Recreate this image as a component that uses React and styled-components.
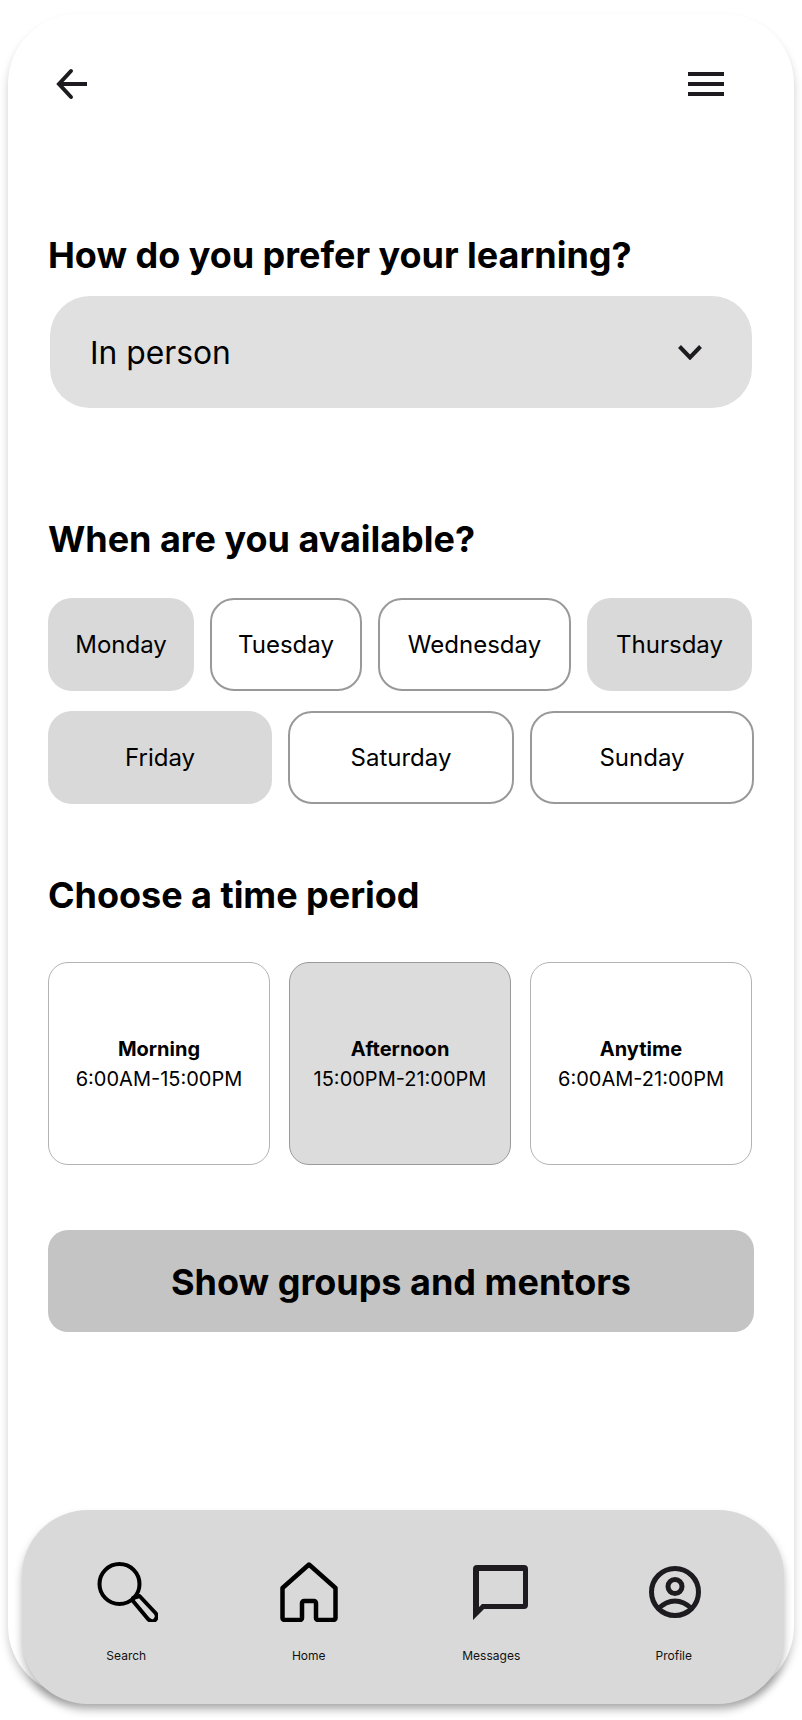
import React from 'react';
import styled, { createGlobalStyle } from 'styled-components';

const Global = createGlobalStyle`
  * { box-sizing: border-box; }
  html, body { margin: 0; padding: 0; background: #fff; }
  body { font-family: Inter, "Noto Sans", sans-serif; color: #000; }
`;

const Page = styled.div`
  width: 802px;
  height: 1720px;
  padding: 14px 8px 24px 8px;
  overflow: hidden;
`;

const Phone = styled.div`
  height: 100%;
  background: #fff;
  border-radius: 70px;
  box-shadow: 0 6px 8px rgba(0, 0, 0, 0.2);
  display: flex;
  flex-direction: column;
`;

const Top = styled.div`
  display: flex;
  justify-content: space-between;
  align-items: center;
  height: 32px;
  margin-top: 54px;
  padding: 0 70px 0 48px;
`;

const Main = styled.div`
  padding: 0 40px;
  display: flex;
  flex-direction: column;
`;

const Title = styled.h2`
  margin: ${p => p.$top}px 0 0;
  font-size: 36px;
  line-height: 44px;
  font-weight: 700;
  letter-spacing: -0.03px;
`;

const Select = styled.div`
  margin: 19px 0 0 2px;
  width: 702px;
  height: 112px;
  border-radius: 40px;
  background: #e0e0e0;
  display: flex;
  align-items: center;
  justify-content: space-between;
  padding: 0 50px 0 40px;
  font-size: 31.8px;
`;

const DayRow = styled.div`
  display: flex;
  gap: 16px;
  margin-top: ${p => p.$top}px;
`;

const Day = styled.div`
  width: ${p => p.$w}px;
  height: 93px;
  border-radius: 24px;
  display: flex;
  align-items: center;
  justify-content: center;
  font-size: 24px;
  background: ${p => (p.$on ? '#d9d9d9' : '#fff')};
  border: ${p => (p.$on ? 'none' : '2px solid #999')};
`;

const Periods = styled.div`
  display: grid;
  grid-template-columns: repeat(3, 222px);
  gap: 19px;
  margin-top: 45px;
`;

const Period = styled.div`
  height: 203px;
  border-radius: 20px;
  display: flex;
  flex-direction: column;
  align-items: center;
  justify-content: center;
  font-size: 20px;
  line-height: 30px;
  background: ${p => (p.$on ? '#dcdcdc' : '#fff')};
  border: 1.5px solid ${p => (p.$on ? '#999' : '#b3b3b3')};
  b { font-weight: 700; }
`;

const Action = styled.div`
  margin-top: 65px;
  width: 706px;
  height: 102px;
  padding-top: 1px;
  border-radius: 20px;
  background: #c4c4c4;
  display: flex;
  align-items: center;
  justify-content: center;
  font-size: 36px;
  font-weight: 700;
`;

const Nav = styled.div`
  margin: auto 10px -8px 14px;
  height: 194px;
  flex-shrink: 0;
  border-radius: 66px;
  background: #d9d9d9;
  box-shadow: 0 6px 8px rgba(0, 0, 0, 0.28);
  display: grid;
  grid-template-columns: repeat(4, 182.5px);
  padding: 52px 0 0 13px;
`;

const NavItem = styled.div`
  display: flex;
  flex-direction: column;
  align-items: center;
  font-size: 12px;
  line-height: 16px;
  color: #111;
`;

const IconSlot = styled.div`
  height: 60px;
  margin-bottom: 26px;
  margin-left: ${p => p.$dx}px;
  display: flex;
  align-items: center;
  justify-content: center;
`;

const days1 = [
  ['Monday', 146, true],
  ['Tuesday', 152, false],
  ['Wednesday', 193, false],
  ['Thursday', 165, true],
];
const days2 = [
  ['Friday', 224, true],
  ['Saturday', 226, false],
  ['Sunday', 224, false],
];

const periods = [
  ['Morning', '6:00AM-15:00PM', false],
  ['Afternoon', '15:00PM-21:00PM', true],
  ['Anytime', '6:00AM-21:00PM', false],
];

function Back() {
  return (
    <svg width="32" height="32" viewBox="0 0 32 32" fill="none" stroke="#1d1b20" strokeWidth="4" strokeLinecap="round" strokeLinejoin="miter">
      <path d="M15 3L3 16l12 13" />
      <path d="M5 16h26" strokeLinecap="butt" />
    </svg>
  );
}

function Burger() {
  return (
    <svg width="36" height="24" viewBox="0 0 36 24" fill="#1d1b20">
      <rect width="36" height="4" />
      <rect y="10" width="36" height="4" />
      <rect y="20" width="36" height="4" />
    </svg>
  );
}

function Chevron() {
  return (
    <svg width="24" height="15" viewBox="0 0 24 15" fill="none" stroke="#1d1b20" strokeWidth="4">
      <path d="M1.5 1.5L12 12.5 22.5 1.5" />
    </svg>
  );
}

function SearchIcon() {
  return (
    <svg width="61" height="60" viewBox="0 0 61 60" fill="none" stroke="#000" strokeWidth="4">
      <circle cx="22.5" cy="22" r="20" />
      <path d="M36 36l6.5-2 16 17c2.5 3 1 6-1 7.5s-4.5 0.5-6.5-1.5L36 39z" strokeLinejoin="round" />
    </svg>
  );
}

function HomeIcon() {
  return (
    <svg width="58" height="60" viewBox="0 0 58 60" fill="none" stroke="#000" strokeWidth="4.5" strokeLinejoin="round">
      <path d="M29 2.5L2.5 26v30a2 2 0 0 0 2 2h15.500a2 2 0 0 0 2-2V41a2 2 0 0 1 2-2h10a2 2 0 0 1 2 2v15a2 2 0 0 0 2 2h15.500a2 2 0 0 0 2-2V26z" />
    </svg>
  );
}

function MessageIcon() {
  return (
    <svg width="55" height="55" viewBox="0 0 55 55" fill="none">
      <path d="M0 55V4a4 4 0 0 1 4-4h47a4 4 0 0 1 4 4v36a4 4 0 0 1-4 4H11zM6 6v36l3-3h41V6z" fill="#1d1b20" fillRule="evenodd" />
    </svg>
  );
}

function ProfileIcon() {
  return (
    <svg width="52" height="52" viewBox="0 0 52 52" fill="none" stroke="#1d1b20" strokeWidth="5">
      <circle cx="26" cy="26" r="23.5" />
      <circle cx="26" cy="20.500" r="7" />
      <path d="M9 43c5-5 11-8 17-8s12 3 17 8" />
    </svg>
  );
}

const navItems = [
  ['Search', <SearchIcon />, 3],
  ['Home', <HomeIcon />, 0],
  ['Messages', <MessageIcon />, 18],
  ['Profile', <ProfileIcon />, 2],
];

export default function App() {
  return (
    <Page>
      <Global />
      <Phone>
        <Top>
          <Back />
          <Burger />
        </Top>
        <Main>
          <Title $top={133}>How do you prefer your learning?</Title>
          <Select>
            In person
            <Chevron />
          </Select>
          <Title $top={109}>When are you available?</Title>
          <DayRow $top={37}>
            {days1.map(([name, w, on]) => (
              <Day key={name} $w={w} $on={on}>{name}</Day>
            ))}
          </DayRow>
          <DayRow $top={20}>
            {days2.map(([name, w, on]) => (
              <Day key={name} $w={w} $on={on}>{name}</Day>
            ))}
          </DayRow>
          <Title $top={69}>Choose a time period</Title>
          <Periods>
            {periods.map(([name, time, on]) => (
              <Period key={name} $on={on}>
                <b>{name}</b>
                <span>{time}</span>
              </Period>
            ))}
          </Periods>
          <Action>Show groups and mentors</Action>
        </Main>
        <Nav>
          {navItems.map(([label, icon, dx]) => (
            <NavItem key={label}>
              <IconSlot $dx={dx}>{icon}</IconSlot>
              {label}
            </NavItem>
          ))}
        </Nav>
      </Phone>
    </Page>
  );
}
